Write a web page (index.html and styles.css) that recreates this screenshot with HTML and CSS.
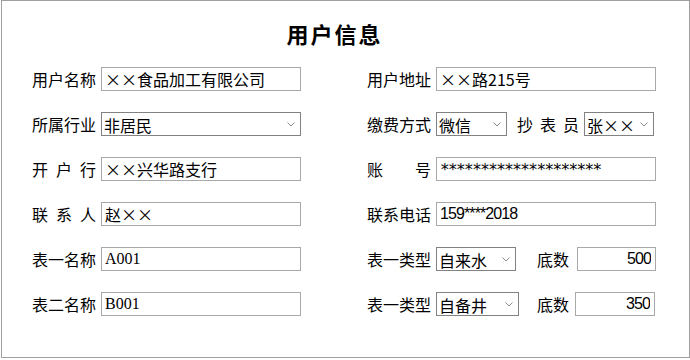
FILE: index.html
```html
<!DOCTYPE html>
<html lang="zh-CN">
<head>
    <meta charset="UTF-8">
    <meta name="viewport" content="width=device-width, initial-scale=1.0">
    <title>用户信息</title>
    <link rel="stylesheet" href="styles.css">
</head>
<body>
    <div class="frame">
        <h1 class="title">用户信息</h1>

        <!-- 第一行 -->
        <div class="row">
            <div class="cell left">
                <label class="lbl">用户名称</label>
                <input class="field" type="text" value="××食品加工有限公司">
            </div>
            <div class="cell">
                <label class="lbl">用户地址</label>
                <input class="field wide" type="text" value="××路215号">
            </div>
        </div>

        <!-- 第二行 -->
        <div class="row">
            <div class="cell left">
                <label class="lbl">所属行业</label>
                <div class="select w200">
                    <select><option>非居民</option></select>
                    <svg width="8" height="5" viewBox="0 0 8 5"><polyline points="0.5,0.5 4,4 7.5,0.5" fill="none" stroke="#8c8c8c" stroke-width="1"/></svg>
                </div>
            </div>
            <div class="cell">
                <label class="lbl">缴费方式</label>
                <div class="select w71">
                    <select><option>微信</option></select>
                    <svg width="8" height="5" viewBox="0 0 8 5"><polyline points="0.5,0.5 4,4 7.5,0.5" fill="none" stroke="#8c8c8c" stroke-width="1"/></svg>
                </div>
                <label class="lbl reader">抄 表 员</label>
                <div class="select w70">
                    <select><option>张××</option></select>
                    <svg width="8" height="5" viewBox="0 0 8 5"><polyline points="0.5,0.5 4,4 7.5,0.5" fill="none" stroke="#8c8c8c" stroke-width="1"/></svg>
                </div>
            </div>
        </div>

        <!-- 第三行 -->
        <div class="row">
            <div class="cell left">
                <label class="lbl">开 户 行</label>
                <input class="field" type="text" value="××兴华路支行">
            </div>
            <div class="cell">
                <label class="lbl">账 号</label>
                <input class="field wide stars" type="text" value="********************">
            </div>
        </div>

        <!-- 第四行 -->
        <div class="row">
            <div class="cell left">
                <label class="lbl">联 系 人</label>
                <input class="field" type="text" value="赵××">
            </div>
            <div class="cell">
                <label class="lbl">联系电话</label>
                <input class="field wide digits" type="text" value="159****2018">
            </div>
        </div>

        <!-- 第五行 -->
        <div class="row">
            <div class="cell left">
                <label class="lbl">表一名称</label>
                <input class="field code" type="text" value="A001">
            </div>
            <div class="cell">
                <label class="lbl">表一类型</label>
                <div class="select w80">
                    <select><option>自来水</option></select>
                    <svg width="8" height="5" viewBox="0 0 8 5"><polyline points="0.5,0.5 4,4 7.5,0.5" fill="none" stroke="#8c8c8c" stroke-width="1"/></svg>
                </div>
                <label class="base">底数</label>
                <input class="field num digits" type="text" value="500">
            </div>
        </div>

        <!-- 第六行 -->
        <div class="row">
            <div class="cell left">
                <label class="lbl">表二名称</label>
                <input class="field code" type="text" value="B001">
            </div>
            <div class="cell">
                <label class="lbl">表一类型</label>
                <div class="select w83">
                    <select><option>自备井</option></select>
                    <svg width="8" height="5" viewBox="0 0 8 5"><polyline points="0.5,0.5 4,4 7.5,0.5" fill="none" stroke="#8c8c8c" stroke-width="1"/></svg>
                </div>
                <label class="base tight">底数</label>
                <input class="field num wider digits" type="text" value="350">
            </div>
        </div>
    </div>
</body>
</html>
```

FILE: styles.css
```css
/* 页面外框 */
body {
    margin: 0;
    background: #fff;
    color: #000;
    font-family: "Noto Sans CJK SC", sans-serif;
    font-size: 16px;
}
.frame {
    box-sizing: border-box;
    width: 689px;
    height: 358px;
    margin-left: 1px;
    padding-left: 30px;
    border: 1px solid #a0a0a0;
}

/* 标题 */
.title {
    margin: 17px 0 19px;
    padding-right: 52px;
    text-align: center;
    font-size: 22px;
    font-weight: bold;
    line-height: 30px;
    letter-spacing: 2px;
}

/* 表单行 */
.row { display: flex; height: 24px; margin-bottom: 21px; }
.cell { display: flex; align-items: center; gap: 5px; }
.cell.left { width: 335px; }
.lbl { width: 64px; line-height: 24px; white-space: nowrap; text-align: justify; text-align-last: justify; }
.lbl.reader { width: 62px; margin-left: 5px; }
.base { width: 32px; margin-left: 16px; }
.base.tight { margin-left: 13px; }

/* 输入框 */
.field {
    box-sizing: border-box;
    width: 200px;
    height: 24px;
    margin: 0;
    padding: 0 3px;
    border: 1px solid #a9a9a9;
    font-family: "Noto Sans CJK SC", sans-serif;
    font-size: 16px;
    color: #000;
    outline: none;
}
.field.wide { width: 220px; }
.field.digits { font-family: "Liberation Sans", sans-serif; letter-spacing: -0.9px; }
.field.stars { font-family: "DejaVu Sans Mono", monospace; letter-spacing: -1.6px; }
.field.code { font-family: "Liberation Serif", serif; }
.field.num { width: 79px; margin-left: 3px; text-align: right; padding-right: 4px; }
.field.num.wider { width: 80px; margin-left: 1px; }

/* 下拉框 */
.select {
    box-sizing: border-box;
    display: flex;
    align-items: center;
    height: 24px;
    border: 1px solid #828282;
}
.select select {
    flex: 1;
    min-width: 0;
    height: 100%;
    padding: 0 2px;
    border: 0;
    background: transparent;
    font-family: "Noto Sans CJK SC", sans-serif;
    font-size: 16px;
    color: #000;
    appearance: none;
    -webkit-appearance: none;
    outline: none;
}
.select svg { flex: none; margin-right: 5px; }
.w200 { width: 200px; }
.w71 { width: 71px; }
.w70 { width: 70px; }
.w80 { width: 80px; }
.w83 { width: 83px; }
```
